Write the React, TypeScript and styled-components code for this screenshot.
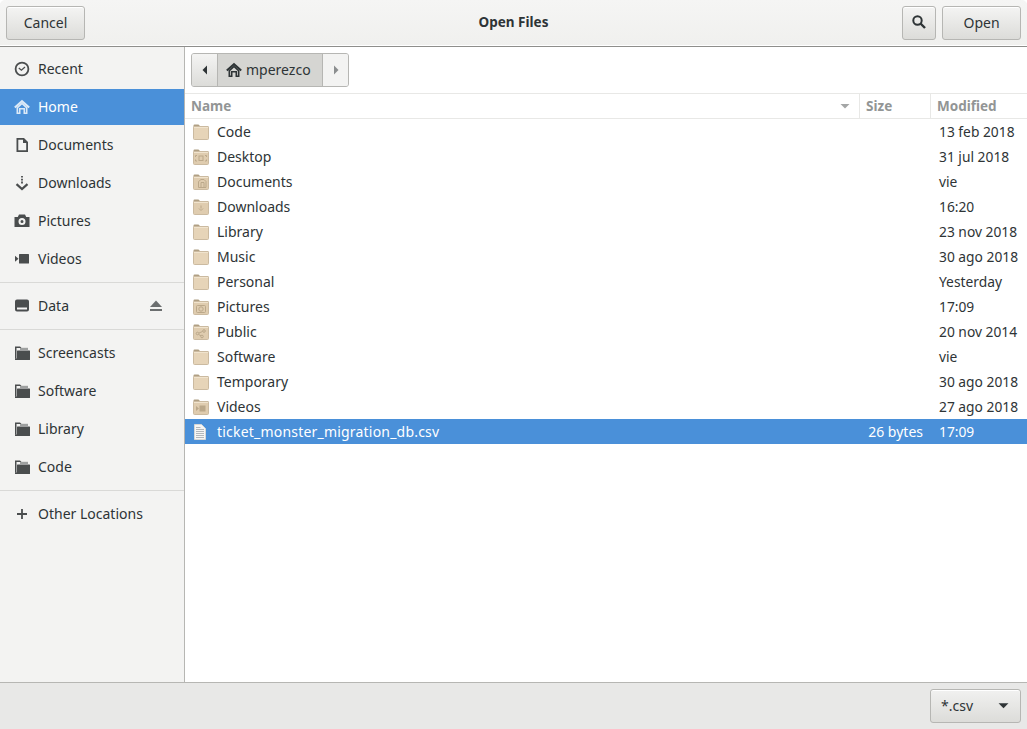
import React from 'react';
import styled, { createGlobalStyle } from 'styled-components';

const GlobalStyle = createGlobalStyle`
  html, body {
    margin: 0;
    padding: 0;
    height: 100%;
    background: #fff;
  }
  #root {
    height: 100%;
  }
`;

const Window = styled.div`
  width: 1027px;
  height: 729px;
  display: flex;
  flex-direction: column;
  overflow: hidden;
  font-family: 'Noto Sans', sans-serif;
  font-size: 14px;
  color: #2e3436;
  background: #fff;
`;

const HeaderBar = styled.header`
  flex: none;
  height: 46px;
  box-sizing: border-box;
  padding: 6px;
  display: grid;
  grid-template-columns: 1fr auto 1fr;
  align-items: flex-start;
  background: linear-gradient(#f5f5f4, #f0f0ee);
  border-bottom: 1px solid #fff;
  box-shadow: 0 1px 0 #8e8e8b;
  border-radius: 5px 5px 0 0;
`;

const HeaderSide = styled.div<{ $end?: boolean }>`
  display: flex;
  gap: 6px;
  justify-content: ${p => (p.$end ? 'flex-end' : 'flex-start')};
`;

const Title = styled.div`
  font-weight: 700;
  line-height: 33px;
  font-size: 13.5px;
`;

const Button = styled.button<{ $w: number }>`
  width: ${p => p.$w}px;
  height: 34px;
  box-sizing: border-box;
  padding: 0 0 2px;
  display: flex;
  align-items: center;
  justify-content: center;
  font: inherit;
  color: #2e3436;
  border: 1px solid #b6b6b3;
  border-radius: 3px;
  background: linear-gradient(#f4f4f3, #dcdcd9);
  box-shadow: inset 0 1px 0 #fff;
`;

const Body = styled.div`
  flex: 1;
  min-height: 0;
  display: flex;
  margin-top: 1px;
`;

const Sidebar = styled.nav`
  flex: none;
  width: 184px;
  padding-top: 4px;
  background: #f3f3f2;
  border-right: 1px solid #b6b6b3;
`;

const Place = styled.div<{ $active?: boolean }>`
  height: 36px;
  margin-bottom: 2px;
  display: flex;
  align-items: center;
  padding-left: 14px;
  gap: 8px;
  background: ${p => (p.$active ? '#4a90d9' : 'transparent')};
  color: ${p => (p.$active ? '#fff' : '#2e3436')};
  &:last-child {
    margin-bottom: 0;
  }
`;

const PlaceIcon = styled.svg`
  flex: none;
  width: 16px;
  height: 16px;
`;

const PlaceLabel = styled.span`
  flex: 1;
  padding-bottom: 2px;
`;

const EjectIcon = styled.svg`
  flex: none;
  width: 14px;
  height: 12px;
  margin-right: 21px;
`;

const PlaceDivider = styled.hr`
  margin: 5px 0;
  border: 0;
  height: 1px;
  background: #d9d9d7;
`;

const Content = styled.main`
  flex: 1;
  min-width: 0;
  display: flex;
  flex-direction: column;
`;

const PathArea = styled.div`
  flex: none;
  height: 47px;
  box-sizing: border-box;
  padding: 6px 6px 0;
  border-bottom: 1px solid #e8e8e6;
`;

const PathBar = styled.div`
  display: inline-flex;
  height: 34px;
  box-sizing: border-box;
  border: 1px solid #b6b6b3;
  border-radius: 3px;
  overflow: hidden;
  background: #eeeeec;
`;

const PathArrow = styled.div<{ $dim?: boolean }>`
  width: 25px;
  display: flex;
  align-items: center;
  justify-content: center;
  background: ${p => (p.$dim ? '#f3f3f2' : 'linear-gradient(#f4f4f3, #dcdcd9)')};
`;

const PathCrumb = styled.div`
  width: 106px;
  box-sizing: border-box;
  padding-left: 8px;
  display: flex;
  align-items: center;
  gap: 4px;
  background: #d5d5d2;
  border-left: 1px solid #b6b6b3;
  border-right: 1px solid #b6b6b3;
`;

const CrumbLabel = styled.span`
  padding-bottom: 1px;
`;

const ColumnHeader = styled.div`
  flex: none;
  height: 25px;
  box-sizing: border-box;
  display: grid;
  grid-template-columns: 674px 71px 1fr;
  border-bottom: 1px solid #e8e8e6;
  color: #929595;
  font-weight: 700;
  font-size: 13.5px;
`;

const ColumnCell = styled.div`
  display: flex;
  align-items: center;
  justify-content: space-between;
  padding: 0 9px 0 6px;
  & + & {
    border-left: 1px solid #e8e8e6;
  }
`;

const FileList = styled.div`
  flex: 1;
  min-height: 0;
`;

const FileRow = styled.div<{ $selected?: boolean }>`
  height: 25px;
  display: grid;
  grid-template-columns: 674px 71px 1fr;
  align-items: center;
  background: ${p => (p.$selected ? '#4a90d9' : 'transparent')};
  color: ${p => (p.$selected ? '#fff' : '#2e3436')};
`;

const FileName = styled.div<{ $wide?: boolean }>`
  display: flex;
  align-items: center;
  gap: 8px;
  padding-left: 8px;
  letter-spacing: ${p => (p.$wide ? '0.2px' : 'normal')};
`;

const FileSize = styled.div`
  text-align: right;
  padding-right: 7px;
`;

const FileDate = styled.div`
  padding-left: 9px;
  white-space: nowrap;
  font-size: 13.8px;
`;

const FooterBar = styled.footer`
  flex: none;
  height: 47px;
  box-sizing: border-box;
  padding: 6px;
  display: flex;
  justify-content: flex-end;
  background: #e8e8e7;
  border-top: 1px solid #b6b6b3;
`;

const FilterSelect = styled.div`
  width: 91px;
  height: 34px;
  box-sizing: border-box;
  padding: 0 11px 1px 10px;
  display: flex;
  align-items: center;
  justify-content: space-between;
  border: 1px solid #b6b6b3;
  border-radius: 3px;
  background: linear-gradient(#f1f1f0, #dcdcd9);
  box-shadow: inset 0 1px 0 #fff;
`;

type PlaceGlyph = 'recent' | 'home' | 'doc' | 'down' | 'camera' | 'video' | 'drive' | 'folder' | 'plus';

const Glyph: React.FC<{ name: PlaceGlyph; color: string }> = ({ name, color }) => {
  const c = color;
  return (
    <PlaceIcon viewBox="0 0 16 16" fill="none">
      {name === 'recent' && (
        <>
          <circle cx="8" cy="8" r="6.4" stroke={c} strokeWidth="1.8" />
          <path d="M4.800 7 7.400 9.200 11 6" stroke={c} strokeWidth="1.300" />
        </>
      )}
      {name === 'home' && (
        <>
          <path d="M0.800 8.600 8 2.200l7.200 6.400" stroke={c} strokeWidth="2" />
          <path
            d="M2.500 8.200 8 3.500l5.500 4.700V15H9.500v-4.500h-3V15h-4zM4.200 8.900v4.500h.8V9h6v4.400h.8V8.900L8 5.600z"
            fill={c}
            fillRule="evenodd"
          />
        </>
      )}
      {name === 'doc' && (
        <path d="M2.500 1h7.500L14 5v10H2.500zM4.300 2.800v10.400h7.900V6H9V2.800z" fill={c} fillRule="evenodd" />
      )}
      {name === 'down' && (
        <>
          <path d="M8 1v1.600M8 3.800v1.600M8 6.600v2" stroke={c} strokeWidth="1.800" />
          <path d="M2.500 9.200 8 14l5.500-4.800" stroke={c} strokeWidth="2.200" />
        </>
      )}
      {name === 'camera' && (
        <path
          d="M5 1.500h6L12.200 4H15.500V14H0.500V4H3.800zM8 5a3.500 3.500 0 1 0 0 7 3.500 3.500 0 0 0 0-7zM8 7a1.500 1.500 0 1 1 0 3 1.500 1.500 0 0 1 0-3z"
          fill={c}
          fillRule="evenodd"
        />
      )}
      {name === 'video' && (
        <>
          <rect x="5" y="3" width="10" height="9.500" rx="0.500" fill={c} />
          <path d="M1 4.800 4.500 7.800 1 10.800z" fill={c} />
        </>
      )}
      {name === 'drive' && (
        <path
          d="M3 1.500h10a2 2 0 0 1 2 2v8a2 2 0 0 1-2 2H3a2 2 0 0 1-2-2v-8a2 2 0 0 1 2-2zM3 9.500V11.500h10V9.500z"
          fill={c}
          fillRule="evenodd"
        />
      )}
      {name === 'folder' && (
        <>
          <path d="M1 1.500h5l1.500 1.500H6.300L5.500 3H2.500v11h-.5a1 1 0 0 1-1-1z" fill={c} />
          <path d="M6 2.800h8V5H6z" fill={c} opacity="0.5" />
          <rect x="3" y="5.500" width="13" height="9.500" rx="0.500" fill={c} />
          <rect x="1" y="13.500" width="3" height="1.500" fill={c} />
        </>
      )}
      {name === 'plus' && <path d="M8 3v10M3 8h10" stroke={c} strokeWidth="1.800" />}
    </PlaceIcon>
  );
};

type Emblem = 'desktop' | 'doc' | 'down' | 'camera' | 'share' | 'video';

const FileIconSvg = styled.svg`
  flex: none;
  width: 16px;
  height: 16px;
`;

const FolderIcon: React.FC<{ emblem?: Emblem }> = ({ emblem }) => {
  const mark = '#bba88a';
  return (
    <FileIconSvg viewBox="0 0 16 16">
      <path d="M0.500 1.500a1 1 0 0 1 1-1h4l1.500 1.500h7.500a1 1 0 0 1 1 1v2h-15z" fill="#b09f83" />
      <rect x="0.500" y="2.500" width="15" height="13" rx="1" fill={emblem ? '#dfccaf' : '#e6d4b8'} stroke="#cbbaa0" />
      <rect x="1" y="3" width="14" height="1" fill="#f0e3cd" />
      {emblem === 'desktop' && (
        <g fill="none" stroke={mark}>
          <rect x="6" y="7" width="4" height="4.500" />
          <path d="M2.500 8V6.500H4M2.500 10.500V12H4M13.500 8V6.500H12M13.500 10.500V12H12" />
        </g>
      )}
      {emblem === 'doc' && (
        <g fill="none" stroke={mark}>
          <path d="M5.500 13.500V7.500L8 5.500h3l2 2v6z" />
          <path d="M8 13.500V8.500h3v5" />
        </g>
      )}
      {emblem === 'down' && <path d="M8 6.500v3M6 9.500l2 2 2-2" fill="none" stroke={mark} />}
      {emblem === 'camera' && (
        <g fill="none" stroke={mark}>
          <rect x="3.500" y="6.500" width="9" height="7" rx="1" />
          <circle cx="8" cy="10" r="2.200" />
        </g>
      )}
      {emblem === 'share' && (
        <g fill="none" stroke={mark}>
          <circle cx="4.500" cy="9.500" r="1.300" />
          <circle cx="11" cy="7" r="1.300" />
          <circle cx="9" cy="12.500" r="1.300" />
          <path d="M6 9l3.500-1.500M5.500 10.500l2.500 1.200" />
        </g>
      )}
      {emblem === 'video' && (
        <g fill={mark}>
          <rect x="6.500" y="6.500" width="6" height="6" />
          <path d="M3 7l3 2.500L3 12z" />
        </g>
      )}
    </FileIconSvg>
  );
};

const TextFileIcon: React.FC = () => (
  <FileIconSvg viewBox="0 0 16 16">
    <path d="M1.500 0.500h7l4 4v11h-11z" fill="#f6f6f5" stroke="#d8d8d6" />
    <path d="M3 3.500h4.500M3 5.500h8M3 7.500h8M3 9.500h8M3 11.500h8M3 13.500h8" stroke="#b4b8bb" />
  </FileIconSvg>
);

const TriangleSvg = styled.svg`
  flex: none;
`;

const Triangle: React.FC<{ dir: 'left' | 'right' | 'down'; color: string; size?: number }> = ({ dir, color, size = 10 }) => (
  <TriangleSvg width={size} height={size} viewBox="0 0 10 10">
    {dir === 'left' && <path d="M7 0.500v9L2.500 5z" fill={color} />}
    {dir === 'right' && <path d="M3 0.500v9L7.500 5z" fill={color} />}
    {dir === 'down' && <path d="M0.500 3h9L5 7.500z" fill={color} />}
  </TriangleSvg>
);

const places: { icon: PlaceGlyph; label: string; active?: boolean }[] = [
  { icon: 'recent', label: 'Recent' },
  { icon: 'home', label: 'Home', active: true },
  { icon: 'doc', label: 'Documents' },
  { icon: 'down', label: 'Downloads' },
  { icon: 'camera', label: 'Pictures' },
  { icon: 'video', label: 'Videos' },
];

const bookmarks = ['Screencasts', 'Software', 'Library', 'Code'];

const files: { name: string; date: string; emblem?: Emblem }[] = [
  { name: 'Code', date: '13 feb 2018' },
  { name: 'Desktop', date: '31 jul 2018', emblem: 'desktop' },
  { name: 'Documents', date: 'vie', emblem: 'doc' },
  { name: 'Downloads', date: '16:20', emblem: 'down' },
  { name: 'Library', date: '23 nov 2018' },
  { name: 'Music', date: '30 ago 2018' },
  { name: 'Personal', date: 'Yesterday' },
  { name: 'Pictures', date: '17:09', emblem: 'camera' },
  { name: 'Public', date: '20 nov 2014', emblem: 'share' },
  { name: 'Software', date: 'vie' },
  { name: 'Temporary', date: '30 ago 2018' },
  { name: 'Videos', date: '27 ago 2018', emblem: 'video' },
];

const DARK = '#4a4d4e';

const App: React.FC = () => (
  <>
    <GlobalStyle />
    <Window>
      <HeaderBar>
        <HeaderSide>
          <Button $w={79}>Cancel</Button>
        </HeaderSide>
        <Title>Open Files</Title>
        <HeaderSide $end>
          <Button $w={34}>
            <svg width="16" height="16" viewBox="0 0 16 16" fill="none">
              <circle cx="6.500" cy="6.500" r="4.200" stroke="#2e3436" strokeWidth="2" />
              <path d="M9.500 9.500 14 14" stroke="#2e3436" strokeWidth="2.400" />
            </svg>
          </Button>
          <Button $w={79}>Open</Button>
        </HeaderSide>
      </HeaderBar>
      <Body>
        <Sidebar>
          {places.map(p => (
            <Place key={p.label} $active={p.active}>
              <Glyph name={p.icon} color={p.active ? '#dbe9f7' : DARK} />
              <PlaceLabel>{p.label}</PlaceLabel>
            </Place>
          ))}
          <PlaceDivider />
          <Place>
            <Glyph name="drive" color={DARK} />
            <PlaceLabel>Data</PlaceLabel>
            <EjectIcon viewBox="0 0 14 12">
              <path d="M7 0.500 13 7H1z" fill="#6b6e6f" />
              <rect x="1" y="9" width="12" height="2" fill="#6b6e6f" />
            </EjectIcon>
          </Place>
          <PlaceDivider />
          {bookmarks.map(b => (
            <Place key={b}>
              <Glyph name="folder" color={DARK} />
              <PlaceLabel>{b}</PlaceLabel>
            </Place>
          ))}
          <PlaceDivider />
          <Place>
            <Glyph name="plus" color={DARK} />
            <PlaceLabel>Other Locations</PlaceLabel>
          </Place>
        </Sidebar>
        <Content>
          <PathArea>
            <PathBar>
              <PathArrow>
                <Triangle dir="left" color="#2e3436" />
              </PathArrow>
              <PathCrumb>
                <Glyph name="home" color="#2e3436" />
                <CrumbLabel>mperezco</CrumbLabel>
              </PathCrumb>
              <PathArrow $dim>
                <Triangle dir="right" color="#8b8e8f" />
              </PathArrow>
            </PathBar>
          </PathArea>
          <ColumnHeader>
            <ColumnCell>
              Name
              <Triangle dir="down" color="#a4a6a6" />
            </ColumnCell>
            <ColumnCell>Size</ColumnCell>
            <ColumnCell>Modified</ColumnCell>
          </ColumnHeader>
          <FileList>
            {files.map(f => (
              <FileRow key={f.name}>
                <FileName>
                  <FolderIcon emblem={f.emblem} />
                  {f.name}
                </FileName>
                <FileSize />
                <FileDate>{f.date}</FileDate>
              </FileRow>
            ))}
            <FileRow $selected>
              <FileName $wide>
                <TextFileIcon />
                ticket_monster_migration_db.csv
              </FileName>
              <FileSize>26 bytes</FileSize>
              <FileDate>17:09</FileDate>
            </FileRow>
          </FileList>
        </Content>
      </Body>
      <FooterBar>
        <FilterSelect>
          *.csv
          <Triangle dir="down" color="#2e3436" size={11} />
        </FilterSelect>
      </FooterBar>
    </Window>
  </>
);

export default App;
